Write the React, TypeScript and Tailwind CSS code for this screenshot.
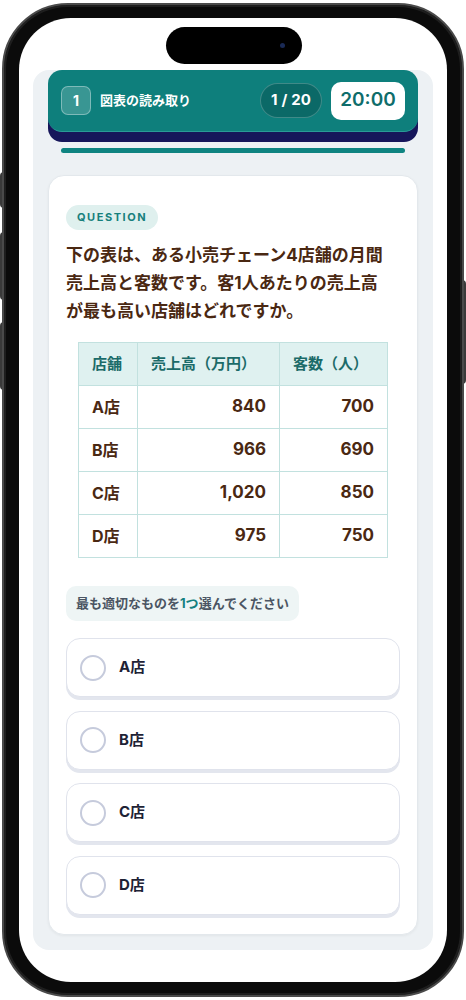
export default function App() {
  const rows = [
    ["A店", "840", "700"],
    ["B店", "966", "690"],
    ["C店", "1,020", "850"],
    ["D店", "975", "750"],
  ];
  const options = ["A店", "B店", "C店", "D店"];
  return (
    <div className="relative w-[466px] h-[1000px] bg-white overflow-hidden font-[Inter,'Noto_Sans_CJK_JP',sans-serif]">
      {/* side buttons */}
      <div className="absolute left-0 top-[172px] w-[4px] h-[36px] rounded-l bg-[#3a3a3a]" />
      <div className="absolute left-0 top-[232px] w-[4px] h-[68px] rounded-l bg-[#3a3a3a]" />
      <div className="absolute left-0 top-[322px] w-[4px] h-[68px] rounded-l bg-[#3a3a3a]" />
      <div className="absolute right-0 top-[280px] w-[4px] h-[104px] rounded-r bg-[#3a3a3a]" />
      <div className="pt-[3px] pl-[2px]">
        <div className="relative w-[462px] h-[994px] rounded-[66px] bg-[#0b0b0b] border-[2px] border-[#4a4a4a] px-[15px] py-[13px] shadow-[inset_0_0_0_2px_#1e1e1e]">
          <div className="relative w-[428px] h-[964px] rounded-[52px] bg-white overflow-hidden">
            {/* dynamic island */}
            <div className="absolute left-[147px] top-[9px] w-[136px] h-[37px] rounded-full bg-black">
              <div className="absolute left-[114px] top-[16px] w-[5px] h-[5px] rounded-full bg-[#1a2a55]" />
            </div>
            <div className="mt-[52px] mx-[14px] bg-[#edf1f4] rounded-[16px] px-[15px] pb-[15px]">
              {/* header */}
              <div className="h-[62px] rounded-[14px] bg-[#0e7f7c] shadow-[0_10px_0_#16165a] flex items-center px-[13px] border-b border-[#2a9a96]">
                <div className="w-[30px] h-[29px] rounded-[7px] bg-[rgba(255,255,255,0.18)] border border-[rgba(255,255,255,0.35)] flex items-center justify-center text-white text-[14px] font-bold">
                  1
                </div>
                <div className="ml-[9px] text-white text-[13px] font-bold">図表の読み取り</div>
                <div className="ml-auto flex items-center gap-[9px]">
                  <div className="w-[62px] h-[35px] rounded-full bg-[#0b6967] border border-[rgba(255,255,255,0.22)] flex items-center justify-center text-white text-[15px] font-bold">
                    <span>1</span>
                    <span className="mx-[4px]">/</span>
                    <span>20</span>
                  </div>
                  <div className="w-[74px] h-[38px] rounded-[10px] bg-white flex items-center justify-center text-[#0f6d6b] text-[19px] font-semibold">
                    20:00
                  </div>
                </div>
              </div>
              {/* progress */}
              <div className="mt-[16px] mx-[13px] h-[5px] rounded-full bg-[#0f8481]" />
              {/* card */}
              <div className="mt-[22px] bg-white rounded-[16px] border border-[#e3e8ec] shadow-[0_1px_3px_rgba(0,0,0,0.05)] pt-[29px] pb-[19px] px-[17px]">
                <div className="flex w-fit items-center h-[25px] px-[11px] rounded-full bg-[#dff0ee] text-[#17807c] text-[11px] font-bold tracking-[0.14em]">
                  QUESTION
                </div>
                <p className="mt-[11px] text-[17px] leading-[28px] font-bold text-[#4a2812]">
                  下の表は、ある小売チェーン4店舗の月間
                  <br />
                  売上高と客数です。客1人あたりの売上高
                  <br />
                  が最も高い店舗はどれですか。
                </p>
                <table className="mt-[17px] mx-[12px] w-[310px] border-collapse">
                  <thead>
                    <tr className="h-[43px] bg-[#dff1f0]">
                      <th className="w-[59px] border border-[#c2e1df] text-left pl-[13px] text-[15px] font-bold text-[#1b6b69]">店舗</th>
                      <th className="w-[142px] border border-[#c2e1df] text-left pl-[13px] text-[15px] font-bold text-[#1b6b69]">売上高（万円）</th>
                      <th className="border border-[#c2e1df] text-left pl-[13px] text-[15px] font-bold text-[#1b6b69]">客数（人）</th>
                    </tr>
                  </thead>
                  <tbody>
                    {rows.map((r) => (
                      <tr key={r[0]} className="h-[43px]">
                        <td className="border border-[#c2e1df] pl-[13px] text-[16px] font-bold text-[#4a2812]">{r[0]}</td>
                        <td className="border border-[#c2e1df] pr-[13px] text-right text-[17px] font-bold text-[#4a2812]">{r[1]}</td>
                        <td className="border border-[#c2e1df] pr-[13px] text-right text-[17px] font-bold text-[#4a2812]">{r[2]}</td>
                      </tr>
                    ))}
                  </tbody>
                </table>
                <div className="mt-[28px] flex w-fit items-center h-[35px] px-[10px] rounded-[10px] bg-[#eef5f5] text-[13px] font-bold text-[#4b5563]">
                  最も適切なものを<span className="text-[#148080]">1つ</span>選んでください
                </div>
                <div className="mt-[17px] flex flex-col gap-[13.5px]">
                  {options.map((o) => (
                    <div
                      key={o}
                      className="h-[59px] rounded-[14px] bg-white border border-[#e0e3ec] shadow-[0_3px_0_#e3e6ee] flex items-center px-[13px] gap-[13px]"
                    >
                      <div className="w-[26px] h-[26px] rounded-full border-2 border-[#c6cbdc]" />
                      <div className="text-[15px] font-bold text-[#1e2235]">{o}</div>
                    </div>
                  ))}
                </div>
              </div>
            </div>
          </div>
        </div>
      </div>
    </div>
  );
}
